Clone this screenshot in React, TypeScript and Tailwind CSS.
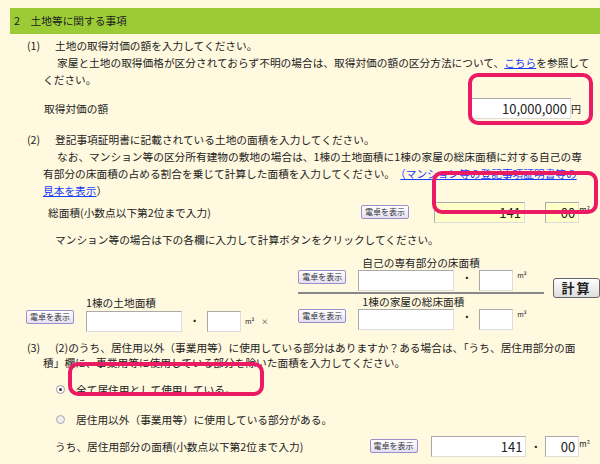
import React from "react";

const Calc = ({ cls = "" }: { cls?: string }) => (
  <button className={"h-[14px] w-[48px] border border-[#9a8fc8] bg-gradient-to-b from-white to-[#e4e0f4] text-[8px] leading-[12px] text-[#333] rounded-[2px] shrink-0 " + cls}>電卓を表示</button>
);
const Box = ({ w, v = "", bg = "bg-white" }: { w: string; v?: string; bg?: string }) => (
  <div className={`${w} ${bg} h-[21px] border border-[#aaa] border-b-[#ddd] border-r-[#ddd] text-right pr-[3px] text-[13px] leading-[20px] shrink-0`}>{v}</div>
);

export default function App() {
  return (
    <div className="w-[600px] h-[464px] bg-[#fff9df] text-[10.7px] text-[#222] relative overflow-hidden whitespace-nowrap" style={{ fontFamily: '"Noto Sans CJK JP", sans-serif' }}>
      <div className="pt-[8px] pl-[10px]">
        <div className="h-[26px] bg-[#9ccc35] flex items-center pl-[4px]">2　土地等に関する事項</div>
      </div>
      <div className="pl-[27px] pr-[10px] leading-[17px]">
        <div className="mt-[3px] flex"><span className="w-[28px]">(1)</span><span>土地の取得対価の額を入力してください。</span></div>
        <div className="pl-[30px]">家屋と土地の取得価格が区分されておらず不明の場合は、取得対価の額の区分方法について、<span className="text-[#1a3cff] underline">こちら</span>を参照して</div>
        <div className="pl-[16px]">ください。</div>
        <div className="flex items-center h-[28px] mt-[6px]">
          <span className="pl-[17px] flex-1">取得対価の額</span>
          <Box w="w-[100px]" v="10,000,000" />
          <span className="text-[10px] mr-[9px]">円</span>
        </div>
        <div className="mt-[9px] flex"><span className="w-[28px]">(2)</span><span>登記事項証明書に記載されている土地の面積を入力してください。</span></div>
        <div className="pl-[30px]">なお、マンション等の区分所有建物の敷地の場合は、1棟の土地面積に1棟の家屋の総床面積に対する自己の専</div>
        <div className="pl-[16px]">有部分の床面積の占める割合を乗じて計算した面積を入力してください。　<span className="text-[#1a3cff] underline">（マンション等の登記事項証明書等の</span></div>
        <div className="pl-[16px]"><span className="text-[#1a3cff] underline">見本を表示</span>）</div>
        <div className="flex items-center h-[26px] mt-[0px]">
          <span className="pl-[21px] w-[345px]">総面積(小数点以下第2位まで入力)</span>
          <Calc />
          <div className="w-[26px]" />
          <Box w="w-[91px]" v="141" bg="bg-[#ffffc8]" />
          <span className="w-[21px] text-center">・</span>
          <Box w="w-[34px]" v="00" bg="bg-[#ffffc8]" />
          <span className="text-[8px] self-start mt-[2px]">m²</span>
        </div>
        <div className="mt-[6px] pl-[28px]">マンション等の場合は下の各欄に入力して計算ボタンをクリックしてください。</div>
      </div>
      <div className="flex pl-[26px] mt-[14px] h-[72px]">
        <div className="flex items-end pb-[2px]">
          <Calc cls="mb-[8px]" />
          <div className="ml-[12px] flex flex-col">
            <span className="leading-[16px]">1棟の土地面積</span>
            <div className="flex items-center"><Box w="w-[96px]" /><span className="w-[25px] text-center">・</span><Box w="w-[34px]" /><span className="text-[7px] ml-[4px]">m²　×</span></div>
          </div>
        </div>
        <div className="ml-[30px] w-[250px] flex flex-col">
          <span className="pl-[64px] leading-[14px] mt-[-6px]">自己の専有部分の床面積</span>
          <div className="flex items-start"><Calc /><div className="ml-[12px] flex"><Box w="w-[96px]" /><span className="w-[25px] text-center">・</span><Box w="w-[34px]" /><span className="text-[7px] ml-[4px]">m²</span></div></div>
          <div className="h-[2px] bg-[#888] my-[1px]" />
          <span className="pl-[64px] leading-[14px]">1棟の家屋の総床面積</span>
          <div className="flex items-start"><Calc /><div className="ml-[12px] flex"><Box w="w-[96px]" /><span className="w-[25px] text-center">・</span><Box w="w-[34px]" /><span className="text-[7px] ml-[4px]">m²</span></div></div>
        </div>
        <div className="ml-[9px] mt-[16px]">
          <button className="w-[47px] h-[20px] border border-[#666] rounded-[3px] bg-gradient-to-b from-white to-[#ddd] text-[13px] font-bold leading-[18px] tracking-[2px]">計算</button>
        </div>
      </div>
      <div className="pl-[27px] pr-[10px] leading-[15px] mt-[6px]">
        <div className="flex"><span className="w-[28px]">(3)</span><span>(2)のうち、居住用以外（事業用等）に使用している部分はありますか？ある場合は、「うち、居住用部分の面</span></div>
        <div className="pl-[16px]">積」欄に、事業用等に使用している部分を除いた面積を入力してください。</div>
        <div className="flex items-center h-[20px] mt-[9px] pl-[29px]">
          <span className="w-[9px] h-[9px] rounded-full border border-[#999] bg-white flex items-center justify-center"><span className="w-[3px] h-[3px] rounded-full bg-[#333]" /></span>
          <span className="ml-[11px]">全て居住用として使用している。</span>
        </div>
        <div className="flex items-center h-[20px] mt-[10px] pl-[29px]">
          <span className="w-[9px] h-[9px] rounded-full border border-[#aaa] bg-[#eee]" />
          <span className="ml-[11px]">居住用以外（事業用等）に使用している部分がある。</span>
        </div>
        <div className="flex items-center h-[24px] mt-[5px]">
          <span className="pl-[28px] w-[345px]">うち、居住用部分の面積(小数点以下第2位まで入力)</span>
          <Calc />
          <div className="w-[14px]" />
          <Box w="w-[95px]" v="141" />
          <span className="w-[19px] text-center">・</span>
          <Box w="w-[34px]" v="00" />
          <span className="text-[8px] self-start mt-[2px]">m²</span>
        </div>
      </div>
      <div className="absolute left-[468px] top-[73px] w-[125px] h-[52px] border-[4px] border-[#ea1a63] rounded-[10px]" />
      <div className="absolute left-[432px] top-[171px] w-[166px] h-[43px] border-[4px] border-[#ea1a63] rounded-[10px]" />
      <div className="absolute left-[68px] top-[362px] w-[196px] h-[34px] border-[4px] border-[#ea1a63] rounded-[10px]" />
    </div>
  );
}
